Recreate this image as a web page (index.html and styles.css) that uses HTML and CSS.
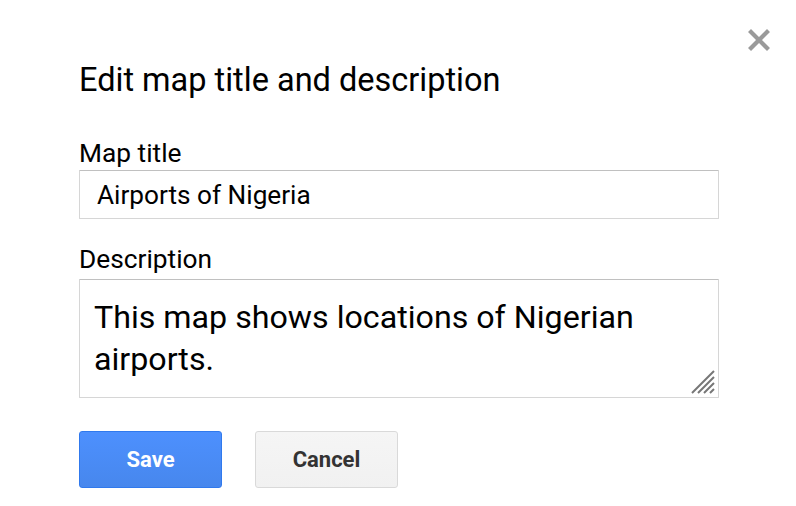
FILE: index.html
```html
<!DOCTYPE html>
<html>
<head>
<meta charset="utf-8">
<link rel="stylesheet" href="styles.css">
</head>
<body>
<div class="dialog">
  <button class="close" aria-label="Close">
    <svg width="22" height="22" viewBox="0 0 22 22"><path d="M3 3 L19 19 M19 3 L3 19" stroke="#9a9a9a" stroke-width="4.2" stroke-linecap="square"/></svg>
  </button>
  <h1 class="title">Edit map title and description</h1>
  <label class="label label-title">Map title</label>
  <input class="field" type="text" value="Airports of Nigeria">
  <label class="label label-desc">Description</label>
  <div class="area-wrap">
    <textarea class="area">This map shows locations of Nigerian airports.</textarea>
    <svg class="grip" width="24" height="24" viewBox="0 0 24 24"><path d="M1 23 L23 1 M7 23 L23 7 M13 23 L23 13 M19 23 L23 19" stroke="#777" stroke-width="2"/></svg>
  </div>
  <div class="actions">
    <button class="btn btn-primary">Save</button>
    <button class="btn btn-default">Cancel</button>
  </div>
</div>
</body>
</html>
```
FILE: styles.css
```css
html, body {
  margin: 0;
  padding: 0;
  background: #fff;
}
body {
  font-family: Roboto, "Liberation Sans", sans-serif;
  color: #000;
}
.dialog {
  position: relative;
  width: 639px;
  padding: 61px 77px 0 79px;
  display: flex;
  flex-direction: column;
}
.close {
  position: absolute;
  top: 29px;
  left: 748px;
  width: 22px;
  height: 22px;
  padding: 0;
  border: 0;
  background: none;
}
.close svg { display: block; }
.title {
  margin: 0;
  font-size: 32.5px;
  font-weight: 400;
  line-height: 38px;
}
.label {
  display: block;
  font-size: 26.3px;
  line-height: 30px;
}
.label-title { margin-top: 39px; margin-bottom: 2px; }
.label-desc { margin-top: 25px; margin-bottom: 5px; }
.field {
  box-sizing: border-box;
  width: 640px;
  height: 49px;
  margin: 0;
  padding: 0 17px;
  border: 1px solid #d6d6d6;
  border-top-color: #c0c0c0;
  border-radius: 1px;
  font-family: Roboto, "Liberation Sans", sans-serif;
  font-size: 26.2px;
  color: #000;
  outline: none;
}
.area-wrap {
  position: relative;
  width: 640px;
  height: 119px;
}
.area {
  box-sizing: border-box;
  display: block;
  width: 100%;
  height: 100%;
  margin: 0;
  padding: 16px 14px;
  border: 1px solid #d6d6d6;
  border-top-color: #c0c0c0;
  border-radius: 1px;
  font-family: Roboto, "Liberation Sans", sans-serif;
  font-size: 32.2px;
  line-height: 42px;
  color: #000;
  resize: none;
  outline: none;
  overflow: hidden;
}
.grip {
  position: absolute;
  right: 4px;
  bottom: 4px;
}
.actions {
  display: flex;
  gap: 33px;
  margin-top: 33px;
}
.btn {
  box-sizing: border-box;
  width: 143px;
  height: 57px;
  border-radius: 3px;
  font-family: Roboto, "Liberation Sans", sans-serif;
  font-size: 22px;
  font-weight: 700;
  padding: 0;
  cursor: pointer;
}
.btn-primary {
  background: linear-gradient(#4d90fe, #4787ed);
  border: 1px solid #3079ed;
  color: #fff;
}
.btn-default {
  background: linear-gradient(#f5f5f5, #f1f1f1);
  border: 1px solid #d9d9d9;
  color: #333;
}
```
